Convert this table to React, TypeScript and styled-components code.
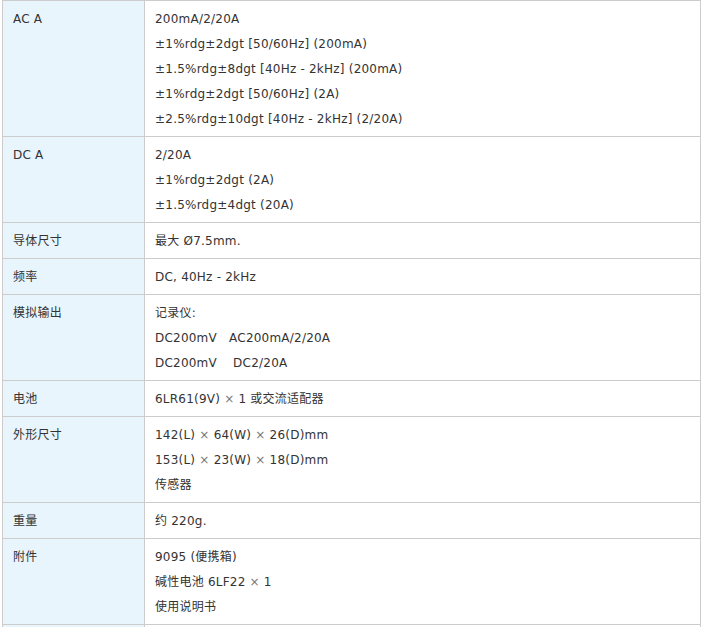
import styled, { createGlobalStyle } from 'styled-components';

const GlobalStyle = createGlobalStyle`
  html, body {
    margin: 0;
    padding: 0;
    background: #fff;
    overflow: hidden;
  }
`;

const Page = styled.div`
  padding: 0 0 0 2px;
`;

const SpecTable = styled.table`
  width: 699px;
  border-collapse: collapse;
  table-layout: fixed;
  font-family: 'DejaVu Sans', Verdana, 'Noto Sans CJK SC', sans-serif;
  font-size: 12px;
  letter-spacing: 0.22px;
  color: #333;
`;

const LabelCell = styled.th`
  width: 121px;
  padding: 6px 10px 4px;
  border: 1px solid #ccc;
  background: #e8f5fd;
  font-weight: normal;
  text-align: left;
  vertical-align: top;
  line-height: 25px;
`;

const ValueCell = styled.td`
  padding: 6px 10px 4px;
  border: 1px solid #ccc;
  background: #fff;
  vertical-align: top;
  line-height: 25px;
`;

const Line = styled.div`
  white-space: pre;
`;

const Times = styled.span`
  color: #777;
`;

type Row = { label: string; lines: React.ReactNode[] };

const x = <Times>×</Times>;

const rows: Row[] = [
  {
    label: 'AC A',
    lines: [
      '200mA/2/20A',
      '±1%rdg±2dgt [50/60Hz] (200mA)',
      '±1.5%rdg±8dgt [40Hz - 2kHz] (200mA)',
      '±1%rdg±2dgt [50/60Hz] (2A)',
      '±2.5%rdg±10dgt [40Hz - 2kHz] (2/20A)',
    ],
  },
  {
    label: 'DC A',
    lines: ['2/20A', '±1%rdg±2dgt (2A)', '±1.5%rdg±4dgt (20A)'],
  },
  { label: '导体尺寸', lines: ['最大 Ø7.5mm.'] },
  { label: '频率', lines: ['DC, 40Hz - 2kHz'] },
  {
    label: '模拟输出',
    lines: ['记录仪:', 'DC200mV   AC200mA/2/20A', 'DC200mV    DC2/20A'],
  },
  {
    label: '电池',
    lines: [<>6LR61(9V) {x} 1 或交流适配器</>],
  },
  {
    label: '外形尺寸',
    lines: [
      <>142(L) {x} 64(W) {x} 26(D)mm</>,
      <>153(L) {x} 23(W) {x} 18(D)mm</>,
      '传感器',
    ],
  },
  { label: '重量', lines: ['约 220g.'] },
  {
    label: '附件',
    lines: ['9095 (便携箱)', <>碱性电池 6LF22 {x} 1</>, '使用说明书'],
  },
  { label: '\u00a0', lines: ['\u00a0'] },
];

const App = () => (
  <Page>
    <GlobalStyle />
    <SpecTable>
      <tbody>
        {rows.map((row, i) => (
          <tr key={i}>
            <LabelCell>{row.label}</LabelCell>
            <ValueCell>
              {row.lines.map((line, j) => (
                <Line key={j}>{line}</Line>
              ))}
            </ValueCell>
          </tr>
        ))}
      </tbody>
    </SpecTable>
  </Page>
);

export default App;
